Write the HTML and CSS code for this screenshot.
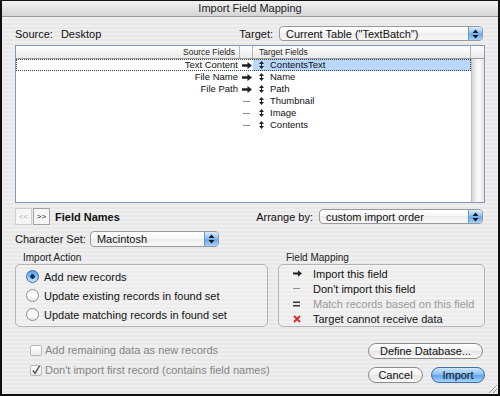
FILE: index.html
```html
<!DOCTYPE html>
<html lang="en">
<head>
    <meta charset="UTF-8">
    <title>Import Field Mapping</title>
    <link rel="stylesheet" href="styles.css">
</head>
<body>
    <div class="window">
        <div class="titlebar">Import Field Mapping</div>

        <div class="content">
            <div class="row-top">
                <div class="source">
                    <span class="source-label">Source:</span>
                    <span>Desktop</span>
                </div>
                <span class="label">Target:</span>
                <div class="popup popup-target">
                    <span class="popup-text">Current Table ("TextBatch")</span>
                    <span class="stepper"><svg width="7" height="10" viewBox="0 0 7 10"><path d="M3.5 0.5L6.5 4H0.5z M3.5 9.5L6.5 6H0.5z" fill="#1a1a1a"/></svg></span>
                </div>
            </div>

            <div class="table">
                <div class="table-head">
                    <div class="th th-source">Source Fields</div>
                    <div class="th th-arrow"></div>
                    <div class="th th-target">Target Fields</div>
                    <div class="th th-scroll"></div>
                </div>
                <div class="table-body">
                    <div class="rows">
                        <div class="trow selected">
                            <div class="td-source">Text Content</div>
                            <div class="td-arrow"><svg width="10" height="7" viewBox="0 0 10 7"><path d="M0 2.3h5.5V0L10 3.5 5.5 7V4.7H0z" fill="#222"/></svg></div>
                            <div class="td-target"><svg class="handle" width="5" height="8" viewBox="0 0 5 8"><path d="M2.5 0L5 3H0z M2.5 8L5 5H0z M2 3h1v2H2z" fill="#222"/></svg>ContentsText</div>
                        </div>
                        <div class="trow">
                            <div class="td-source">File Name</div>
                            <div class="td-arrow"><svg width="10" height="7" viewBox="0 0 10 7"><path d="M0 2.3h5.5V0L10 3.5 5.5 7V4.7H0z" fill="#222"/></svg></div>
                            <div class="td-target"><svg class="handle" width="5" height="8" viewBox="0 0 5 8"><path d="M2.5 0L5 3H0z M2.5 8L5 5H0z M2 3h1v2H2z" fill="#222"/></svg>Name</div>
                        </div>
                        <div class="trow">
                            <div class="td-source">File Path</div>
                            <div class="td-arrow"><svg width="10" height="7" viewBox="0 0 10 7"><path d="M0 2.3h5.5V0L10 3.5 5.5 7V4.7H0z" fill="#222"/></svg></div>
                            <div class="td-target"><svg class="handle" width="5" height="8" viewBox="0 0 5 8"><path d="M2.5 0L5 3H0z M2.5 8L5 5H0z M2 3h1v2H2z" fill="#222"/></svg>Path</div>
                        </div>
                        <div class="trow">
                            <div class="td-source"></div>
                            <div class="td-arrow"><span class="dash"></span></div>
                            <div class="td-target"><svg class="handle" width="5" height="8" viewBox="0 0 5 8"><path d="M2.5 0L5 3H0z M2.5 8L5 5H0z M2 3h1v2H2z" fill="#222"/></svg>Thumbnail</div>
                        </div>
                        <div class="trow">
                            <div class="td-source"></div>
                            <div class="td-arrow"><span class="dash"></span></div>
                            <div class="td-target"><svg class="handle" width="5" height="8" viewBox="0 0 5 8"><path d="M2.5 0L5 3H0z M2.5 8L5 5H0z M2 3h1v2H2z" fill="#222"/></svg>Image</div>
                        </div>
                        <div class="trow">
                            <div class="td-source"></div>
                            <div class="td-arrow"><span class="dash"></span></div>
                            <div class="td-target"><svg class="handle" width="5" height="8" viewBox="0 0 5 8"><path d="M2.5 0L5 3H0z M2.5 8L5 5H0z M2 3h1v2H2z" fill="#222"/></svg>Contents</div>
                        </div>
                    </div>
                    <div class="scrollbar"></div>
                </div>
            </div>

            <div class="row-nav">
                <span class="nav-btn disabled">&lt;&lt;</span>
                <span class="nav-btn">&gt;&gt;</span>
                <span class="field-names">Field Names</span>
                <span class="spacer"></span>
                <span class="label">Arrange by:</span>
                <div class="popup popup-arrange">
                    <span class="popup-text">custom import order</span>
                    <span class="stepper"><svg width="7" height="10" viewBox="0 0 7 10"><path d="M3.5 0.5L6.5 4H0.5z M3.5 9.5L6.5 6H0.5z" fill="#1a1a1a"/></svg></span>
                </div>
            </div>

            <div class="row-charset">
                <span class="label">Character Set:</span>
                <div class="popup popup-charset">
                    <span class="popup-text">Macintosh</span>
                    <span class="stepper"><svg width="7" height="10" viewBox="0 0 7 10"><path d="M3.5 0.5L6.5 4H0.5z M3.5 9.5L6.5 6H0.5z" fill="#1a1a1a"/></svg></span>
                </div>
            </div>

            <div class="groups">
                <div class="group group-action">
                    <div class="group-title">Import Action</div>
                    <div class="group-box">
                        <div class="radio-row"><span class="radio on"></span>Add new records</div>
                        <div class="radio-row"><span class="radio"></span>Update existing records in found set</div>
                        <div class="radio-row"><span class="radio"></span>Update matching records in found set</div>
                    </div>
                </div>
                <div class="group group-mapping">
                    <div class="group-title">Field Mapping</div>
                    <div class="group-box legend">
                        <div class="legend-row">
                            <span class="legend-icon"><svg width="9" height="7" viewBox="0 0 10 7"><path d="M0 2.3h5.5V0L10 3.5 5.5 7V4.7H0z" fill="#222"/></svg></span>
                            Import this field
                        </div>
                        <div class="legend-row">
                            <span class="legend-icon"><span class="dash"></span></span>
                            Don't import this field
                        </div>
                        <div class="legend-row muted">
                            <span class="legend-icon"><svg width="7" height="6" viewBox="0 0 7 6"><path d="M0 0.5h7v1.5H0z M0 4h7v1.5H0z" fill="#333"/></svg></span>
                            Match records based on this field
                        </div>
                        <div class="legend-row">
                            <span class="legend-icon"><svg width="8" height="8" viewBox="0 0 8 8"><path d="M1 1L7 7 M7 1L1 7" stroke="#d42a2a" stroke-width="1.8"/></svg></span>
                            Target cannot receive data
                        </div>
                    </div>
                </div>
            </div>

            <div class="bottom">
                <div class="checks">
                    <div class="check-row"><span class="checkbox"></span>Add remaining data as new records</div>
                    <div class="check-row"><span class="checkbox"><svg width="11" height="11" viewBox="0 0 11 11"><path d="M2 5.5L4.5 8.5 9.5 0.5" fill="none" stroke="#555" stroke-width="1.6"/></svg></span>Don't import first record (contains field names)</div>
                </div>
                <div class="buttons">
                    <button class="btn btn-define">Define Database...</button>
                    <div class="btn-pair">
                        <button class="btn btn-cancel">Cancel</button>
                        <button class="btn btn-import">Import</button>
                    </div>
                </div>
            </div>
        </div>

        <div class="grip"></div>
    </div>
</body>
</html>
```

FILE: styles.css
```css
* {
    margin: 0;
    padding: 0;
    box-sizing: border-box;
}

body {
    width: 500px;
    height: 396px;
    overflow: hidden;
    font-family: "Liberation Sans", Arial, sans-serif;
    font-size: 11px;
    color: #111;
    background: #000;
}

.window {
    position: relative;
    width: 500px;
    height: 396px;
    border: 2px solid #111;
    border-top-width: 1px;
    background: repeating-linear-gradient(to bottom, #efefef 0, #efefef 2px, #e8e8e8 2px, #e8e8e8 4px);
}

.titlebar {
    height: 16px;
    line-height: 15px;
    text-align: center;
    font-size: 11px;
    color: #222;
    background: linear-gradient(#f3f3f3, #d5d5d5);
    border-bottom: 1px solid #9c9c9c;
}

.content {
    padding: 9px 13px 0;
}

.label {
    white-space: nowrap;
}

/* top row */

.row-top {
    display: flex;
    align-items: center;
    height: 15px;
}

.source {
    flex: 1;
    display: flex;
    gap: 8px;
}

.popup {
    display: flex;
    align-items: center;
    height: 15px;
    border: 1px solid #9a9a9a;
    border-radius: 4px;
    background: linear-gradient(#ffffff, #f6f6f6 50%, #ececec 50%, #f8f8f8);
    overflow: hidden;
}

.popup-text {
    flex: 1;
    padding-left: 6px;
    white-space: nowrap;
}

.stepper {
    width: 14px;
    height: 100%;
    display: flex;
    align-items: center;
    justify-content: center;
    border-left: 1px solid #6d95c4;
    background: linear-gradient(#d9ecfd, #8fc2f3 45%, #6aa9ec 55%, #a6d3fb);
}

.popup-target {
    width: 204px;
    margin-left: 6px;
    margin-right: 2px;
}

/* table */

.table {
    margin-top: 4px;
    height: 158px;
    border: 1px solid #8499b6;
    background: #fff;
    display: flex;
    flex-direction: column;
}

.table-head {
    display: flex;
    height: 13px;
    background: linear-gradient(#ffffff, #e9e9e9);
    border-bottom: 1px solid #9e9e9e;
    font-size: 8.5px;
    line-height: 12px;
    color: #222;
}

.th {
    border-right: 1px solid #b5b5b5;
}

.th-source {
    width: 224px;
    text-align: right;
    padding-right: 4px;
}

.th-arrow {
    width: 13px;
}

.th-target {
    flex: 1;
    padding-left: 6px;
}

.th-scroll {
    width: 13px;
    border-right: none;
}

.table-body {
    flex: 1;
    display: flex;
}

.rows {
    flex: 1;
}

.trow {
    display: flex;
    height: 12px;
    line-height: 12px;
    font-size: 9.5px;
}

.trow.selected {
    outline: 1px dotted #444;
    outline-offset: -1px;
}

.trow.selected .td-target {
    background: #b8d7fa;
}

.td-source {
    width: 224px;
    text-align: right;
    padding-right: 2px;
    white-space: nowrap;
}

.td-arrow {
    width: 13px;
    display: flex;
    align-items: center;
    justify-content: center;
}

.td-target {
    flex: 1;
    display: flex;
    align-items: center;
    gap: 6px;
    padding-left: 6px;
}

.dash {
    display: inline-block;
    width: 7px;
    height: 1px;
    background: #8f8f8f;
}

.scrollbar {
    width: 13px;
    border-left: 1px solid #bdbdbd;
    background: linear-gradient(to right, #d6d6d6, #f2f2f2 35%, #fbfbfb 60%, #e4e4e4);
}

/* below table */

.row-nav {
    display: flex;
    align-items: center;
    margin-top: 5px;
    height: 17px;
}

.nav-btn {
    width: 17px;
    height: 17px;
    margin-right: 1px;
    border: 1px solid #a3a3a3;
    background: #f6f6f6;
    font-size: 8px;
    line-height: 15px;
    text-align: center;
    color: #222;
}

.nav-btn.disabled {
    color: #b0b0b0;
    border-color: #cdcdcd;
}

.field-names {
    margin-left: 4px;
    font-weight: bold;
}

.spacer {
    flex: 1;
}

.popup-arrange {
    width: 164px;
    margin-left: 6px;
    margin-right: 2px;
}

.row-charset {
    display: flex;
    align-items: center;
    margin-top: 6px;
    height: 16px;
}

.popup-charset {
    width: 129px;
    height: 16px;
    margin-left: 4px;
}

/* groups */

.groups {
    display: flex;
    gap: 10px;
    margin-top: 5px;
}

.group-action {
    width: 253px;
}

.group-mapping {
    flex: 1;
}

.group-title {
    height: 12px;
    padding-left: 8px;
    font-size: 10px;
    line-height: 12px;
    color: #222;
}

.group-box {
    height: 63px;
    border: 1px solid #b4b4b4;
    border-radius: 5px;
    background: rgba(255, 255, 255, 0.18);
    padding: 2px 0 0 10px;
}

.radio-row {
    display: flex;
    align-items: center;
    gap: 5px;
    height: 19px;
    white-space: nowrap;
}

.radio {
    width: 13px;
    height: 13px;
    border-radius: 50%;
    border: 1px solid #8c8c8c;
    background: linear-gradient(#f4f4f4, #ffffff 60%, #e2e2e2);
}

.radio.on {
    border-color: #3c6aa6;
    background: radial-gradient(circle at 50% 50%, #16305e 0, #16305e 2px, transparent 2.6px),
                linear-gradient(#5d9fe6, #90c4f4 55%, #cfe8fe);
}

.legend {
    padding: 1px 0 0 14px;
}

.legend-row {
    display: flex;
    align-items: center;
    height: 15px;
    white-space: nowrap;
}

.legend-icon {
    width: 20px;
    display: flex;
    align-items: center;
}

.legend-row.muted {
    color: #9a9a9a;
}

/* bottom */

.bottom {
    display: flex;
    justify-content: space-between;
    margin-top: 13px;
}

.checks {
    padding-left: 15px;
}

.check-row {
    display: flex;
    align-items: center;
    gap: 3px;
    height: 20px;
    color: #858585;
    white-space: nowrap;
}

.checkbox {
    width: 12px;
    height: 11px;
    border: 1px solid #b9b9b9;
    border-radius: 2px;
    background: linear-gradient(#ffffff, #ebebeb);
    display: flex;
    align-items: center;
    justify-content: center;
}

.buttons {
    display: flex;
    flex-direction: column;
    align-items: flex-end;
    gap: 8px;
    padding-top: 3px;
}

.btn-pair {
    display: flex;
    gap: 8px;
}

.btn {
    height: 16px;
    border: 1px solid #8a8a8a;
    border-radius: 8px;
    font-family: "Liberation Sans", Arial, sans-serif;
    font-size: 11px;
    color: #111;
    background: linear-gradient(#ffffff, #f1f1f1 50%, #e3e3e3 50%, #fafafa);
}

.btn-define {
    width: 115px;
    margin-right: 2px;
}

.btn-cancel {
    width: 55px;
}

.btn-import {
    width: 54px;
    border-color: #3f6ea6;
    background: linear-gradient(#cde6fd, #8cc2f4 45%, #5ea5ea 55%, #a7d5fc);
}

.grip {
    position: absolute;
    right: 1px;
    bottom: 1px;
    width: 10px;
    height: 10px;
    background: repeating-linear-gradient(135deg, transparent 0, transparent 2px, #9a9a9a 2px, #9a9a9a 3px);
    clip-path: polygon(100% 0, 100% 100%, 0 100%);
}
```
